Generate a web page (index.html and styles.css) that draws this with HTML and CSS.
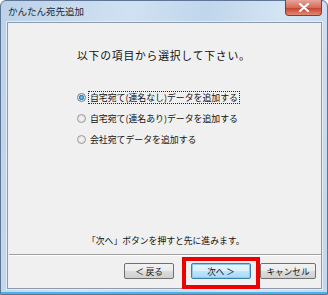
FILE: index.html
```html
<!DOCTYPE html>
<html lang="ja">
<head>
<meta charset="utf-8">
<link rel="stylesheet" href="styles.css">
</head>
<body>
<div class="window">
  <div class="titlebar">
    <span class="title">かんたん宛先追加</span>
    <div class="close"><svg width="12" height="9" viewBox="0 0 12 9"><path d="M2 1 L10 8 M10 1 L2 8" stroke="#fff" stroke-width="2.2" stroke-linecap="round"/></svg></div>
  </div>
  <div class="client">
    <div class="content">
      <p class="lead">以下の項目から選択して下さい。</p>
      <div class="options">
        <label class="opt"><span class="radio checked"></span><span class="text focus">自宅宛て(連名なし)データを追加する</span></label>
        <label class="opt"><span class="radio"></span><span class="text">自宅宛て(連名あり)データを追加する</span></label>
        <label class="opt"><span class="radio"></span><span class="text">会社宛てデータを追加する</span></label>
      </div>
      <p class="hint">「次へ」ボタンを押すと先に進みます。</p>
    </div>
    <div class="sep"></div>
    <div class="buttons">
      <button class="btn">＜ 戻る</button>
      <button class="btn default">次へ ＞</button>
      <button class="btn">キャンセル</button>
    </div>
  </div>
  <div class="highlight"></div>
</div>
</body>
</html>
```

FILE: styles.css
```css
* { box-sizing: border-box; }
html, body { margin: 0; padding: 0; }
body {
  width: 328px;
  height: 295px;
  overflow: hidden;
  font-family: "Noto Sans CJK JP", "Noto Sans", sans-serif;
  background: #fff;
}
.window {
  position: relative;
  width: 328px;
  height: 295px;
  border: 1px solid #5f7595;
  border-radius: 6px 6px 0 0;
  background: linear-gradient(100deg, #bcd2e9 0%, #d0e1f2 35%, #c0d6ec 55%, #d4e4f3 75%, #c2d7ed 100%);
  display: flex;
  flex-direction: column;
  padding: 0 5px 5px 6px;
  box-shadow: inset 0 -2px 0 #49b3e8;
}
.titlebar {
  height: 21px;
  display: flex;
  align-items: center;
  justify-content: space-between;
  position: relative;
}
.title {
  font-size: 9.5px;
  color: #1d2736;
  padding-left: 1px;
  margin-top: -1px;
}
.close {
  position: absolute;
  right: 0;
  top: -1px;
  width: 37px;
  height: 16px;
  border: 1px solid #8a3a34;
  border-top: none;
  border-radius: 0 0 4px 4px;
  background: linear-gradient(#e9a59a 0%, #d66a5c 50%, #c8442f 55%, #e08a76 100%);
  display: flex;
  align-items: center;
  justify-content: center;
}
.client {
  flex: 1;
  background: #f0f0f0;
  border: 1px solid #8d9aab;
  box-shadow: 0 0 0 1px #e4edf7;
  display: flex;
  flex-direction: column;
}
.content {
  flex: 1;
  padding: 0 0 0 69px;
  display: flex;
  flex-direction: column;
}
.lead {
  margin: 25px 0 0 0;
  font-size: 10.8px;
  letter-spacing: 0.8px;
  line-height: 14px;
  color: #111;
}
.options {
  margin-top: 29px;
  display: flex;
  flex-direction: column;
  gap: 9px;
}
.opt {
  display: flex;
  align-items: center;
  height: 12px;
  font-size: 8.9px;
  color: #111;
}
.radio {
  width: 9px;
  height: 9px;
  border-radius: 50%;
  border: 1px solid #9a9a9a;
  background: radial-gradient(circle, #f4f4f4 0%, #dcdcdc 100%);
  margin-right: 3px;
  flex: none;
}
.radio.checked {
  background: radial-gradient(circle, #7fd0f5 0%, #2b86c4 45%, #e8eef4 60%, #d4d8dc 100%);
  border-color: #5f7f9c;
}
.text {
  line-height: 11px;
  padding: 0 1px;
}
.text.focus {
  outline: 1px dotted #222;
}
.hint {
  margin: auto 0 8px 10px;
  font-size: 8.8px;
  line-height: 11px;
  color: #111;
}
.sep {
  height: 2px;
  margin: 0 0 0 1px;
  border-top: 1px solid #a0a0a0;
  border-bottom: 1px solid #fff;
}
.buttons {
  height: 32px;
  display: flex;
  justify-content: flex-end;
  align-items: flex-start;
  padding: 7px 5px 0 0;
  gap: 9px;
}
.btn {
  height: 16px;
  padding: 0;
  margin: 0;
  font-family: "Noto Sans CJK JP", sans-serif;
  font-size: 8.6px;
  line-height: 14px;
  color: #111;
  border: 1px solid #707070;
  border-radius: 2px;
  background: linear-gradient(#f2f2f2 0%, #ebebeb 50%, #dddddd 51%, #cfcfcf 100%);
  width: 50px;
}
.btn:nth-child(1) { width: 50px; margin-right: 8px; }
.btn.default {
  width: 60px;
  border-color: #3c7fb1;
  background: linear-gradient(#eaf6fd 0%, #d9f0fc 50%, #bee6fd 51%, #a7d9f5 100%);
  box-shadow: inset 0 0 0 1px #8fc9ee;
}
.btn:nth-child(3) { width: 56px; }
.highlight {
  position: absolute;
  left: 181px;
  top: 256px;
  width: 78px;
  height: 32px;
  border: 4px solid #ee0000;
}
```
